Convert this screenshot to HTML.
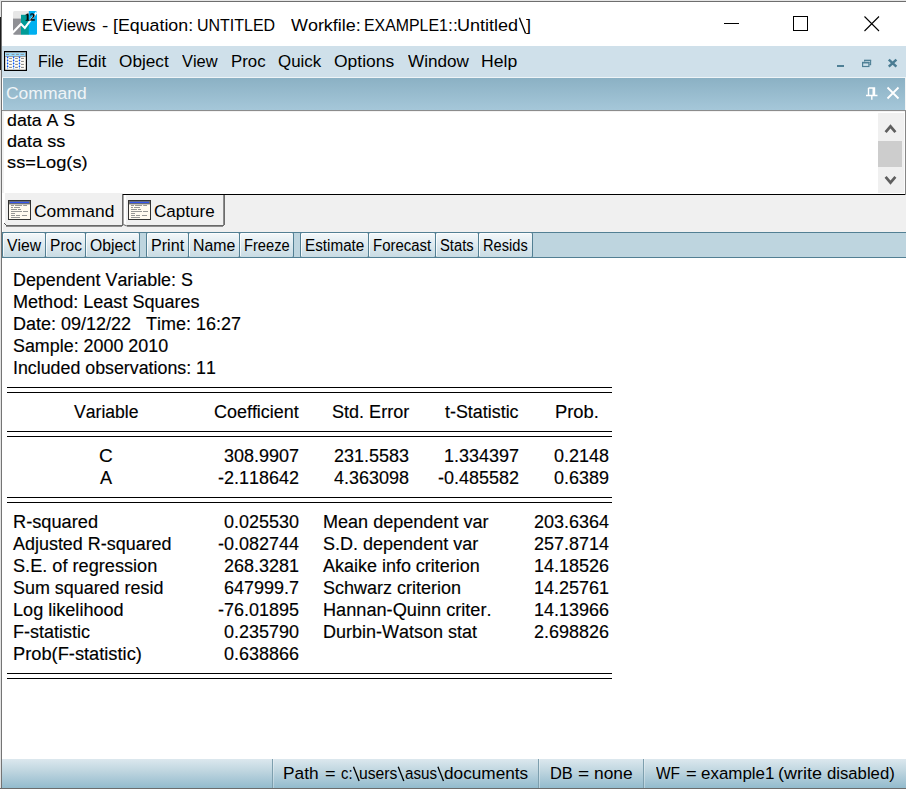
<!DOCTYPE html>
<html>
<head>
<meta charset="utf-8">
<title>EViews</title>
<style>
html,body{margin:0;padding:0;}
body{width:906px;height:789px;position:relative;overflow:hidden;background:#fff;font-family:"Liberation Sans",sans-serif;}
.a{position:absolute;}
.t{position:absolute;white-space:pre;font-kerning:none;transform-origin:0 0;font-family:"Liberation Sans",sans-serif;}
.b{-webkit-text-stroke:0.15px #000;}
.btn{position:absolute;top:232px;height:24px;border:1px solid #527f93;border-radius:2px;background:linear-gradient(#f4f8fa,#e0ebf0 45%,#c8dbe3);box-sizing:content-box;box-shadow:inset 1px 1px 0 rgba(255,255,255,0.75);}
.hl{position:absolute;left:7px;width:605px;height:1px;background:#000;}
</style>
</head>
<body>
<!-- window frame -->
<div class="a" style="left:0;top:0;width:906px;height:1px;background:#e6e6e6"></div>
<div class="a" style="left:1px;top:1px;width:905px;height:1px;background:#6e6e6e"></div>
<div class="a" style="left:0;top:0;width:1px;height:789px;background:#e2e2e2"></div>
<div class="a" style="left:0;top:17px;width:1px;height:53px;background:#1a1a1a"></div>
<div class="a" style="left:1px;top:1px;width:1px;height:788px;background:#747474"></div>

<!-- title icon -->
<svg class="a" style="left:13px;top:11px" width="24" height="24" viewBox="0 0 24 24">
<defs><clipPath id="ic"><rect x="0" y="0" width="24" height="23.8" rx="1.6"/></clipPath></defs>
<g clip-path="url(#ic)">
<rect x="0" y="0" width="16" height="8" fill="#e7e7e7"/>
<rect x="0" y="7.6" width="8" height="16.4" fill="#8f9095"/>
<rect x="8" y="3.8" width="8" height="20.2" fill="#009b97"/>
<rect x="15.8" y="0" width="8.2" height="24" fill="#00b0f0"/>
<polyline points="-0.5,21.9 8,13.1 11.8,16.9 23.6,1.4" fill="none" stroke="#fff" stroke-width="2.1"/>
</g>
<path d="M15.34 8.94 16.48 9.06V9.5H12.8V9.06L13.93 8.94V3.81L12.8 4.19V3.76L14.65 2.63H15.34Z M21.55 9.5H17.41V8.54Q17.83 8.07 18.19 7.7Q18.97 6.9 19.33 6.44Q19.69 5.98 19.86 5.49Q20.02 5 20.02 4.37Q20.02 3.81 19.77 3.47Q19.51 3.13 19.08 3.13Q18.78 3.13 18.6 3.2Q18.42 3.26 18.26 3.4L18.05 4.38H17.63V2.83Q18.02 2.74 18.39 2.68Q18.77 2.61 19.21 2.61Q20.28 2.61 20.86 3.08Q21.43 3.54 21.43 4.39Q21.43 4.92 21.26 5.36Q21.09 5.79 20.72 6.2Q20.35 6.62 19.25 7.54Q18.83 7.9 18.35 8.35H21.55Z" fill="#0a0a0a" stroke="#0a0a0a" stroke-width="0.4"/>
</svg>

<!-- window controls -->
<div class="a" style="left:724px;top:23px;width:15px;height:1px;background:#000"></div>
<div class="a" style="left:793px;top:16px;width:13px;height:13px;border:1px solid #000"></div>
<svg class="a" style="left:863px;top:15px" width="18" height="18" viewBox="0 0 18 18"><path d="M1.5 1.5 L16 16 M16 1.5 L1.5 16" stroke="#000" stroke-width="1.1" fill="none"/></svg>

<!-- menu bar -->
<div class="a" style="left:2px;top:46px;width:904px;height:31px;background:#cfe0ea"></div>
<div class="a" style="left:2px;top:77px;width:904px;height:1px;background:#eef4f7"></div>
<!-- menu icon -->
<svg class="a" style="left:4px;top:51px" width="23" height="20" viewBox="0 0 23 20">
<rect x="0.6" y="0.6" width="21.8" height="18.8" fill="#fffdf5" stroke="#000" stroke-width="1.2"/>
<rect x="1.2" y="1.2" width="20.6" height="4" fill="#99dcff"/>
<rect x="1.2" y="1" width="20.6" height="0.7" fill="#8a8580"/>
<rect x="21" y="1.2" width="0.8" height="4.4" fill="#8a8a8a"/>
<rect x="2.1" y="2.9" width="3.0" height="0.9" fill="#8a8a8a"/><rect x="7.6" y="2.9" width="2.8" height="0.9" fill="#8a8a8a"/><rect x="12.1" y="2.9" width="2.8" height="0.9" fill="#8a8a8a"/><rect x="16.5" y="2.9" width="3.4" height="0.9" fill="#8a8a8a"/>
<rect x="1.2" y="5.0" width="20.6" height="0.8" fill="#868686"/>
<rect x="3.1" y="5.8" width="1" height="12.4" fill="#a8dcff"/><circle cx="3.6" cy="6.4" r="0.8" fill="#0a50ff"/><circle cx="3.6" cy="9.4" r="0.8" fill="#0a50ff"/><circle cx="3.6" cy="12.4" r="0.8" fill="#0a50ff"/><circle cx="3.6" cy="15.4" r="0.8" fill="#0a50ff"/><circle cx="3.6" cy="17.7" r="0.6" fill="#86b4ff"/><rect x="9.1" y="5.8" width="1" height="12.4" fill="#a8dcff"/><circle cx="9.6" cy="6.4" r="0.8" fill="#0a50ff"/><circle cx="9.6" cy="9.4" r="0.8" fill="#0a50ff"/><circle cx="9.6" cy="12.4" r="0.8" fill="#0a50ff"/><circle cx="9.6" cy="15.4" r="0.8" fill="#0a50ff"/><circle cx="9.6" cy="17.7" r="0.6" fill="#86b4ff"/><rect x="15.0" y="5.8" width="1" height="12.4" fill="#a8dcff"/><circle cx="15.5" cy="6.4" r="0.8" fill="#0a50ff"/><circle cx="15.5" cy="9.4" r="0.8" fill="#0a50ff"/><circle cx="15.5" cy="12.4" r="0.8" fill="#0a50ff"/><circle cx="15.5" cy="15.4" r="0.8" fill="#0a50ff"/><circle cx="15.5" cy="17.7" r="0.6" fill="#86b4ff"/>
<rect x="5.1" y="6.9" width="2.8" height="1" fill="#858585"/><rect x="11.1" y="6.9" width="2.8" height="1" fill="#858585"/><rect x="17" y="6.9" width="2.9" height="1" fill="#858585"/><rect x="5.1" y="9.9" width="2.8" height="1" fill="#858585"/><rect x="11.1" y="9.9" width="2.8" height="1" fill="#858585"/><rect x="17" y="9.9" width="2.9" height="1" fill="#858585"/><rect x="5.1" y="12.9" width="2.8" height="1" fill="#858585"/><rect x="11.1" y="12.9" width="2.8" height="1" fill="#858585"/><rect x="17" y="12.9" width="2.9" height="1" fill="#858585"/><rect x="5.1" y="15.899999999999999" width="2.8" height="1" fill="#858585"/><rect x="11.1" y="15.899999999999999" width="2.8" height="1" fill="#858585"/><rect x="17" y="15.899999999999999" width="2.9" height="1" fill="#858585"/>
</svg>
<!-- mdi controls -->
<div class="a" style="left:837px;top:65px;width:7px;height:2px;background:#4f8096"></div>
<svg class="a" style="left:861px;top:59px" width="11" height="9" viewBox="0 0 11 9"><path d="M3.6 2.6V1.4H9.6V5.6H8.4" fill="none" stroke="#4f8096" stroke-width="1.1"/><rect x="3.1" y="0.9" width="7" height="1.2" fill="#4f8096"/><rect x="1.6" y="3.5" width="6.3" height="4" fill="none" stroke="#4f8096" stroke-width="1.2"/><rect x="1" y="2.9" width="7.5" height="1.5" fill="#4f8096"/></svg>
<svg class="a" style="left:887px;top:58px" width="11" height="10" viewBox="0 0 11 10"><path d="M1.8 1.6L9.4 8.6M9.4 1.6L1.8 8.6" stroke="#4a7c93" stroke-width="2.5" fill="none"/></svg>

<!-- command header -->
<div class="a" style="left:3px;top:78px;width:902px;height:32px;background:linear-gradient(#8bb1c4,#a5c7d9)"></div>
<div class="a" style="left:905px;top:78px;width:1px;height:33px;background:#f4f4f4"></div>
<div class="a" style="left:2px;top:110px;width:904px;height:1px;background:#8c8c8c"></div>
<!-- pin + close -->
<svg class="a" style="left:865px;top:87px" width="14" height="15" viewBox="0 0 14 15"><path d="M3.5 1H9.5V8.5M3.5 1V8.5M1 8.5H12.5M6.8 8.5V12.8" fill="none" stroke="#fff" stroke-width="1.4"/><rect x="7.5" y="1" width="2" height="7.5" fill="#fff"/></svg>
<svg class="a" style="left:886px;top:86px" width="14" height="14" viewBox="0 0 14 14"><path d="M1.5 1.5L12.5 12.5M12.5 1.5L1.5 12.5" stroke="#fff" stroke-width="1.8" fill="none"/></svg>

<!-- command text box -->
<div class="a" style="left:3px;top:111px;width:902px;height:83px;background:#fff"></div>
<div class="a" style="left:3px;top:111px;width:902px;height:1px;background:#f3f3f3"></div>
<div class="a" style="left:2px;top:111px;width:2px;height:82px;background:#f2f2f2"></div>
<div class="a" style="left:905px;top:111px;width:1px;height:84px;background:#868686"></div>
<!-- scrollbar -->
<div class="a" style="left:878px;top:113px;width:27px;height:81px;background:#f0f0f0"></div>
<div class="a" style="left:878px;top:141px;width:24px;height:26px;background:#cdcdcd"></div>
<svg class="a" style="left:883px;top:122px" width="15" height="13" viewBox="0 0 15 13"><path d="M2.6 10.2L7.5 4.4L12.4 10.2" fill="none" stroke="#5f5f5f" stroke-width="2.7"/></svg>
<svg class="a" style="left:883px;top:174px" width="15" height="13" viewBox="0 0 15 13"><path d="M2.6 2.8L7.5 8.6L12.4 2.8" fill="none" stroke="#5f5f5f" stroke-width="2.7"/></svg>

<!-- tab strip -->
<div class="a" style="left:3px;top:193px;width:903px;height:39px;background:#f0f0f0"></div>
<div class="a" style="left:123px;top:193px;width:782px;height:1px;background:#fff"></div>
<div class="a" style="left:123px;top:194px;width:782px;height:1px;background:#000"></div>
<div class="a" style="left:904px;top:112px;width:1px;height:82px;background:#fbfbfb"></div>
<div class="a" style="left:905px;top:111px;width:1px;height:84px;background:#868686"></div>
<!-- command tab -->
<div class="a" style="left:3px;top:193px;width:2px;height:31px;background:#fff"></div>
<div class="a" style="left:6px;top:225px;width:117px;height:1px;background:#686868"></div>
<div class="a" style="left:6px;top:226px;width:116px;height:1px;background:#8e8e8e"></div>
<div class="a" style="left:122px;top:194px;width:1px;height:32px;background:#6a6a6a"></div>
<div class="a" style="left:123px;top:195px;width:1px;height:30px;background:#a6a6a6"></div>
<svg class="a" style="left:3px;top:222px" width="5" height="5" viewBox="0 0 5 5"><path d="M1 1L3.5 3.5" stroke="#555" stroke-width="1"/></svg>
<!-- capture tab -->
<div class="a" style="left:124px;top:195px;width:2px;height:30px;background:#fff"></div>
<div class="a" style="left:127px;top:225px;width:97px;height:1px;background:#686868"></div>
<div class="a" style="left:127px;top:226px;width:96px;height:1px;background:#8e8e8e"></div>
<div class="a" style="left:223px;top:195px;width:1px;height:30px;background:#8c8c8c"></div>
<div class="a" style="left:224px;top:195px;width:1px;height:30px;background:#6c6c6c"></div>
<svg class="a" style="left:122px;top:222px" width="6" height="6" viewBox="0 0 6 6"><path d="M1.3 2.5L4.8 4" stroke="#777" stroke-width="1.2" fill="none"/></svg>
<!-- tab icons -->
<svg class="a" style="left:8px;top:200px" width="23" height="20" viewBox="0 0 23 20"><g>
<rect x="0.5" y="0.5" width="22" height="19" fill="#fffaf0" stroke="#333" stroke-width="1"/>
<rect x="1" y="1" width="21" height="3.4" fill="#6e6e6e"/>
<rect x="2" y="1.8" width="19" height="1.3" fill="#3355f0"/>
<g stroke="#8a8a8a" stroke-width="0.9">
<path d="M3 5.5H6M7 5.5H14M15.2 5.5H19"/>
<path d="M3 7.5H5M6 7.5H12"/>
<path d="M3 9.5H9M10 9.5H13"/>
<path d="M3 11.5H14M15 11.5H20"/>
<path d="M3 13.5H7"/>
<path d="M3 15.5H7M8 15.5H12M14 15.5H19"/>
<path d="M3 17.5H12"/>
</g>
</g></svg>
<svg class="a" style="left:128px;top:200px" width="23" height="20" viewBox="0 0 23 20">
<g>
<rect x="0.5" y="0.5" width="22" height="19" fill="#fffaf0" stroke="#333" stroke-width="1"/>
<rect x="1" y="1" width="21" height="3.4" fill="#6e6e6e"/>
<rect x="2" y="1.8" width="19" height="1.3" fill="#3355f0"/>
<g stroke="#8a8a8a" stroke-width="0.9">
<path d="M3 5.5H6M7 5.5H14M15.2 5.5H19"/>
<path d="M3 7.5H5M6 7.5H12"/>
<path d="M3 9.5H9M10 9.5H13"/>
<path d="M3 11.5H14M15 11.5H20"/>
<path d="M3 13.5H7"/>
<path d="M3 15.5H7M8 15.5H12M14 15.5H19"/>
<path d="M3 17.5H12"/>
</g>
</g>
</svg>

<!-- toolbar -->
<div class="a" style="left:2px;top:232px;width:904px;height:26px;background:#bed5df"></div>
<div class="a" style="left:2px;top:232px;width:904px;height:1px;background:#527f93"></div>
<div class="a" style="left:2px;top:257px;width:904px;height:1px;background:#527f93"></div>
<div class="btn" style="left:2px;width:42px"></div>
<div class="btn" style="left:45px;width:39px"></div>
<div class="btn" style="left:85px;width:53px"></div>
<div class="btn" style="left:146px;width:41px"></div>
<div class="btn" style="left:188px;width:50px"></div>
<div class="btn" style="left:239px;width:53px"></div>
<div class="btn" style="left:300px;width:67px"></div>
<div class="btn" style="left:368px;width:66px"></div>
<div class="btn" style="left:435px;width:42px"></div>
<div class="btn" style="left:478px;width:53px"></div>

<!-- table rules -->
<div class="hl" style="top:387px"></div><div class="hl" style="top:392px"></div>
<div class="hl" style="top:431px"></div><div class="hl" style="top:436px"></div>
<div class="hl" style="top:497px"></div><div class="hl" style="top:502px"></div>
<div class="hl" style="top:673px"></div><div class="hl" style="top:678px"></div>

<!-- status bar -->
<div class="a" style="left:2px;top:759px;width:904px;height:29px;background:linear-gradient(#dce8ee,#c0d6e0 40%,#93bbcd)"></div>
<div class="a" style="left:0;top:788px;width:906px;height:1px;background:#6c6c6c"></div>
<div class="a" style="left:272px;top:759px;width:1px;height:29px;background:#7d9fae"></div>
<div class="a" style="left:538px;top:759px;width:1px;height:29px;background:#7d9fae"></div>
<div class="a" style="left:643px;top:759px;width:1px;height:29px;background:#7d9fae"></div>

<div class="a" style="left:273px;top:759px;width:1px;height:29px;background:rgba(255,255,255,0.3)"></div>
<div class="a" style="left:539px;top:759px;width:1px;height:29px;background:rgba(255,255,255,0.3)"></div>
<div class="a" style="left:644px;top:759px;width:1px;height:29px;background:rgba(255,255,255,0.3)"></div>
<svg class="a" style="left:0;top:0;pointer-events:none" width="906" height="789" viewBox="0 0 906 789"><g stroke="#000" stroke-width="1.35" stroke-linecap="butt">
<line x1="519.4" y1="17.8" x2="525.6" y2="33.5"/>
<line x1="353.5" y1="766.8" x2="359.1" y2="781"/>
<line x1="398.2" y1="766.8" x2="403.8" y2="781"/>
<line x1="437.9" y1="766.8" x2="443.5" y2="781"/>
</g></svg>
<span class="t" style="left:41.88px;top:15.00px;font-size:17.4px;line-height:20px;color:#000;transform:scaleX(0.9225);">EViews</span>
<span class="t" style="left:101.76px;top:15.00px;font-size:17.4px;line-height:20px;color:#000;transform:scaleX(1.0836);">-</span>
<span class="t" style="left:113.03px;top:15.00px;font-size:17.4px;line-height:20px;color:#000;transform:scaleX(1.0227);">[Equation:</span>
<span class="t" style="left:196.87px;top:15.00px;font-size:17.4px;line-height:20px;color:#000;transform:scaleX(0.9185);">UNTITLED</span>
<span class="t" style="left:290.82px;top:15.00px;font-size:17.4px;line-height:20px;color:#000;transform:scaleX(1.0308);">Workfile:</span>
<span class="t" style="left:364.30px;top:15.00px;font-size:17.4px;line-height:20px;color:#000;transform:scaleX(0.9135);">EXAMPLE1</span>
<span class="t" style="left:448.18px;top:15.00px;font-size:17.4px;line-height:20px;color:#000;transform:scaleX(1.0176);">::</span>
<span class="t" style="left:457.01px;top:15.00px;font-size:17.4px;line-height:20px;color:#000;transform:scaleX(1.0371);">Untitled</span>
<span class="t" style="left:526.46px;top:15.00px;font-size:17.4px;line-height:20px;color:#000;transform:scaleX(1.0419);">]</span>
<span class="t" style="left:38.29px;top:51.00px;font-size:17.4px;line-height:20px;color:#000;transform:scaleX(0.9178);">File</span>
<span class="t" style="left:76.50px;top:51.00px;font-size:17.4px;line-height:20px;color:#000;transform:scaleX(0.9785);">Edit</span>
<span class="t" style="left:118.78px;top:51.00px;font-size:17.4px;line-height:20px;color:#000;transform:scaleX(0.9897);">Object</span>
<span class="t" style="left:182.23px;top:51.00px;font-size:17.4px;line-height:20px;color:#000;transform:scaleX(0.9453);">View</span>
<span class="t" style="left:231.02px;top:51.00px;font-size:17.4px;line-height:20px;color:#000;transform:scaleX(0.9654);">Proc</span>
<span class="t" style="left:277.70px;top:51.00px;font-size:17.4px;line-height:20px;color:#000;transform:scaleX(0.9713);">Quick</span>
<span class="t" style="left:333.97px;top:51.00px;font-size:17.4px;line-height:20px;color:#000;transform:scaleX(1.0038);">Options</span>
<span class="t" style="left:407.62px;top:51.00px;font-size:17.4px;line-height:20px;color:#000;transform:scaleX(0.9851);">Window</span>
<span class="t" style="left:481.06px;top:51.00px;font-size:17.4px;line-height:20px;color:#000;transform:scaleX(1.0117);">Help</span>
<span class="t" style="left:5.91px;top:83.00px;font-size:17.4px;line-height:20px;color:#eff4f7;transform:scaleX(1.0049);">Command</span>
<span class="t b" style="left:6.85px;top:111.00px;font-size:16.6px;line-height:19px;color:#000;transform:scaleX(1.0708);">data A S</span>
<span class="t b" style="left:6.84px;top:132.00px;font-size:16.6px;line-height:19px;color:#000;transform:scaleX(1.0900);">data ss</span>
<span class="t b" style="left:7.09px;top:153.00px;font-size:16.6px;line-height:19px;color:#000;transform:scaleX(1.0999);">ss=Log(s)</span>
<span class="t" style="left:34.11px;top:201.00px;font-size:17.4px;line-height:20px;color:#000;transform:scaleX(1.0024);">Command</span>
<span class="t" style="left:154.13px;top:201.00px;font-size:17.4px;line-height:20px;color:#000;transform:scaleX(0.9799);">Capture</span>
<span class="t" style="left:6.93px;top:237.00px;font-size:15.8px;line-height:17px;color:#000;transform:scaleX(0.9939);">View</span>
<span class="t" style="left:49.62px;top:237.00px;font-size:15.8px;line-height:17px;color:#000;transform:scaleX(0.9848);">Proc</span>
<span class="t" style="left:89.65px;top:237.00px;font-size:15.8px;line-height:17px;color:#000;transform:scaleX(0.9980);">Object</span>
<span class="t" style="left:150.58px;top:237.00px;font-size:15.8px;line-height:17px;color:#000;transform:scaleX(1.0203);">Print</span>
<span class="t" style="left:192.70px;top:237.00px;font-size:15.8px;line-height:17px;color:#000;transform:scaleX(1.0040);">Name</span>
<span class="t" style="left:243.60px;top:237.00px;font-size:15.8px;line-height:17px;color:#000;transform:scaleX(0.9286);">Freeze</span>
<span class="t" style="left:304.55px;top:237.00px;font-size:15.8px;line-height:17px;color:#000;transform:scaleX(0.9655);">Estimate</span>
<span class="t" style="left:372.57px;top:237.00px;font-size:15.8px;line-height:17px;color:#000;transform:scaleX(0.9460);">Forecast</span>
<span class="t" style="left:439.93px;top:237.00px;font-size:15.8px;line-height:17px;color:#000;transform:scaleX(0.9335);">Stats</span>
<span class="t" style="left:483.10px;top:237.00px;font-size:15.8px;line-height:17px;color:#000;transform:scaleX(0.9264);">Resids</span>
<span class="t b" style="left:12.60px;top:270.00px;font-size:17.6px;line-height:20px;color:#000;transform:scaleX(1.0163);">Dependent Variable: S</span>
<span class="t b" style="left:12.60px;top:292.00px;font-size:17.6px;line-height:20px;color:#000;transform:scaleX(1.0260);">Method: Least Squares</span>
<span class="t b" style="left:12.60px;top:314.00px;font-size:17.6px;line-height:20px;color:#000;transform:scaleX(1.0220);">Date: 09/12/22   Time: 16:27</span>
<span class="t b" style="left:12.60px;top:336.00px;font-size:17.6px;line-height:20px;color:#000;transform:scaleX(1.0164);">Sample: 2000 2010</span>
<span class="t b" style="left:12.60px;top:358.00px;font-size:17.6px;line-height:20px;color:#000;transform:scaleX(1.0118);">Included observations: 11</span>
<span class="t b" style="left:73.72px;top:402.00px;font-size:17.6px;line-height:20px;color:#000;transform:scaleX(1.0001);">Variable</span>
<span class="t b" style="left:214.09px;top:402.00px;font-size:17.6px;line-height:20px;color:#000;transform:scaleX(1.0195);">Coefficient</span>
<span class="t b" style="left:331.78px;top:402.00px;font-size:17.6px;line-height:20px;color:#000;transform:scaleX(1.0258);">Std. Error</span>
<span class="t b" style="left:444.93px;top:402.00px;font-size:17.6px;line-height:20px;color:#000;transform:scaleX(1.0166);">t-Statistic</span>
<span class="t b" style="left:555.29px;top:402.00px;font-size:17.6px;line-height:20px;color:#000;transform:scaleX(1.0436);">Prob.</span>
<span class="t b" style="left:98.64px;top:446.00px;font-size:17.6px;line-height:20px;color:#000;transform:scaleX(1.0770);">C</span>
<span class="t b" style="left:224.03px;top:446.00px;font-size:17.6px;line-height:20px;color:#000;transform:scaleX(1.0216);">308.9907</span>
<span class="t b" style="left:334.43px;top:446.00px;font-size:17.6px;line-height:20px;color:#000;transform:scaleX(1.0216);">231.5583</span>
<span class="t b" style="left:443.83px;top:446.00px;font-size:17.6px;line-height:20px;color:#000;transform:scaleX(1.0216);">1.334397</span>
<span class="t b" style="left:554.02px;top:446.00px;font-size:17.6px;line-height:20px;color:#000;transform:scaleX(1.0216);">0.2148</span>
<span class="t b" style="left:99.56px;top:468.00px;font-size:17.6px;line-height:20px;color:#000;transform:scaleX(1.0286);">A</span>
<span class="t b" style="left:218.05px;top:468.00px;font-size:17.6px;line-height:20px;color:#000;transform:scaleX(1.0216);">-2.118642</span>
<span class="t b" style="left:334.43px;top:468.00px;font-size:17.6px;line-height:20px;color:#000;transform:scaleX(1.0216);">4.363098</span>
<span class="t b" style="left:437.85px;top:468.00px;font-size:17.6px;line-height:20px;color:#000;transform:scaleX(1.0216);">-0.485582</span>
<span class="t b" style="left:554.02px;top:468.00px;font-size:17.6px;line-height:20px;color:#000;transform:scaleX(1.0216);">0.6389</span>
<span class="t b" style="left:12.60px;top:512.00px;font-size:17.6px;line-height:20px;color:#000;transform:scaleX(1.0357);">R-squared</span>
<span class="t b" style="left:224.03px;top:512.00px;font-size:17.6px;line-height:20px;color:#000;transform:scaleX(1.0216);">0.025530</span>
<span class="t b" style="left:322.70px;top:512.00px;font-size:17.6px;line-height:20px;color:#000;transform:scaleX(1.0254);">Mean dependent var</span>
<span class="t b" style="left:534.03px;top:512.00px;font-size:17.6px;line-height:20px;color:#000;transform:scaleX(1.0216);">203.6364</span>
<span class="t b" style="left:12.60px;top:534.00px;font-size:17.6px;line-height:20px;color:#000;transform:scaleX(1.0197);">Adjusted R-squared</span>
<span class="t b" style="left:218.05px;top:534.00px;font-size:17.6px;line-height:20px;color:#000;transform:scaleX(1.0216);">-0.082744</span>
<span class="t b" style="left:322.70px;top:534.00px;font-size:17.6px;line-height:20px;color:#000;transform:scaleX(1.0237);">S.D. dependent var</span>
<span class="t b" style="left:534.03px;top:534.00px;font-size:17.6px;line-height:20px;color:#000;transform:scaleX(1.0216);">257.8714</span>
<span class="t b" style="left:12.60px;top:556.00px;font-size:17.6px;line-height:20px;color:#000;transform:scaleX(1.0317);">S.E. of regression</span>
<span class="t b" style="left:224.03px;top:556.00px;font-size:17.6px;line-height:20px;color:#000;transform:scaleX(1.0216);">268.3281</span>
<span class="t b" style="left:322.70px;top:556.00px;font-size:17.6px;line-height:20px;color:#000;transform:scaleX(1.0211);">Akaike info criterion</span>
<span class="t b" style="left:534.03px;top:556.00px;font-size:17.6px;line-height:20px;color:#000;transform:scaleX(1.0216);">14.18526</span>
<span class="t b" style="left:12.60px;top:578.00px;font-size:17.6px;line-height:20px;color:#000;transform:scaleX(1.0182);">Sum squared resid</span>
<span class="t b" style="left:224.03px;top:578.00px;font-size:17.6px;line-height:20px;color:#000;transform:scaleX(1.0216);">647999.7</span>
<span class="t b" style="left:322.70px;top:578.00px;font-size:17.6px;line-height:20px;color:#000;transform:scaleX(1.0226);">Schwarz criterion</span>
<span class="t b" style="left:534.03px;top:578.00px;font-size:17.6px;line-height:20px;color:#000;transform:scaleX(1.0216);">14.25761</span>
<span class="t b" style="left:12.60px;top:600.00px;font-size:17.6px;line-height:20px;color:#000;transform:scaleX(1.0285);">Log likelihood</span>
<span class="t b" style="left:218.05px;top:600.00px;font-size:17.6px;line-height:20px;color:#000;transform:scaleX(1.0216);">-76.01895</span>
<span class="t b" style="left:322.70px;top:600.00px;font-size:17.6px;line-height:20px;color:#000;transform:scaleX(1.0321);">Hannan-Quinn criter.</span>
<span class="t b" style="left:534.03px;top:600.00px;font-size:17.6px;line-height:20px;color:#000;transform:scaleX(1.0216);">14.13966</span>
<span class="t b" style="left:12.60px;top:622.00px;font-size:17.6px;line-height:20px;color:#000;transform:scaleX(1.0214);">F-statistic</span>
<span class="t b" style="left:224.03px;top:622.00px;font-size:17.6px;line-height:20px;color:#000;transform:scaleX(1.0216);">0.235790</span>
<span class="t b" style="left:322.70px;top:622.00px;font-size:17.6px;line-height:20px;color:#000;transform:scaleX(1.0229);">Durbin-Watson stat</span>
<span class="t b" style="left:534.03px;top:622.00px;font-size:17.6px;line-height:20px;color:#000;transform:scaleX(1.0216);">2.698826</span>
<span class="t b" style="left:12.60px;top:644.00px;font-size:17.6px;line-height:20px;color:#000;transform:scaleX(1.0378);">Prob(F-statistic)</span>
<span class="t b" style="left:224.03px;top:644.00px;font-size:17.6px;line-height:20px;color:#000;transform:scaleX(1.0216);">0.638866</span>
<span class="t" style="left:283.18px;top:763.00px;font-size:17.4px;line-height:20px;color:#000;transform:scaleX(0.9935);">Path</span>
<span class="t" style="left:324.52px;top:763.00px;font-size:17.4px;line-height:20px;color:#000;transform:scaleX(1.0416);">=</span>
<span class="t" style="left:340.87px;top:763.00px;font-size:17.4px;line-height:20px;color:#000;transform:scaleX(0.8483);">c:</span>
<span class="t" style="left:359.28px;top:763.00px;font-size:17.4px;line-height:20px;color:#000;transform:scaleX(0.9027);">users</span>
<span class="t" style="left:404.85px;top:763.00px;font-size:17.4px;line-height:20px;color:#000;transform:scaleX(0.8737);">asus</span>
<span class="t" style="left:444.08px;top:763.00px;font-size:17.4px;line-height:20px;color:#000;transform:scaleX(0.9891);">documents</span>
<span class="t" style="left:549.55px;top:763.00px;font-size:17.4px;line-height:20px;color:#000;transform:scaleX(0.9444);">DB</span>
<span class="t" style="left:578.26px;top:763.00px;font-size:17.4px;line-height:20px;color:#000;transform:scaleX(1.1008);">=</span>
<span class="t" style="left:594.25px;top:763.00px;font-size:17.4px;line-height:20px;color:#000;transform:scaleX(0.9984);">none</span>
<span class="t" style="left:655.93px;top:763.00px;font-size:17.4px;line-height:20px;color:#000;transform:scaleX(0.8910);">WF</span>
<span class="t" style="left:685.80px;top:763.00px;font-size:17.4px;line-height:20px;color:#000;transform:scaleX(1.0535);">=</span>
<span class="t" style="left:700.88px;top:763.00px;font-size:17.4px;line-height:20px;color:#000;transform:scaleX(0.9740);">example1</span>
<span class="t" style="left:778.49px;top:763.00px;font-size:17.4px;line-height:20px;color:#000;transform:scaleX(1.0330);">(write</span>
<span class="t" style="left:827.00px;top:763.00px;font-size:17.4px;line-height:20px;color:#000;transform:scaleX(0.9598);">disabled)</span>
</body>
</html>
